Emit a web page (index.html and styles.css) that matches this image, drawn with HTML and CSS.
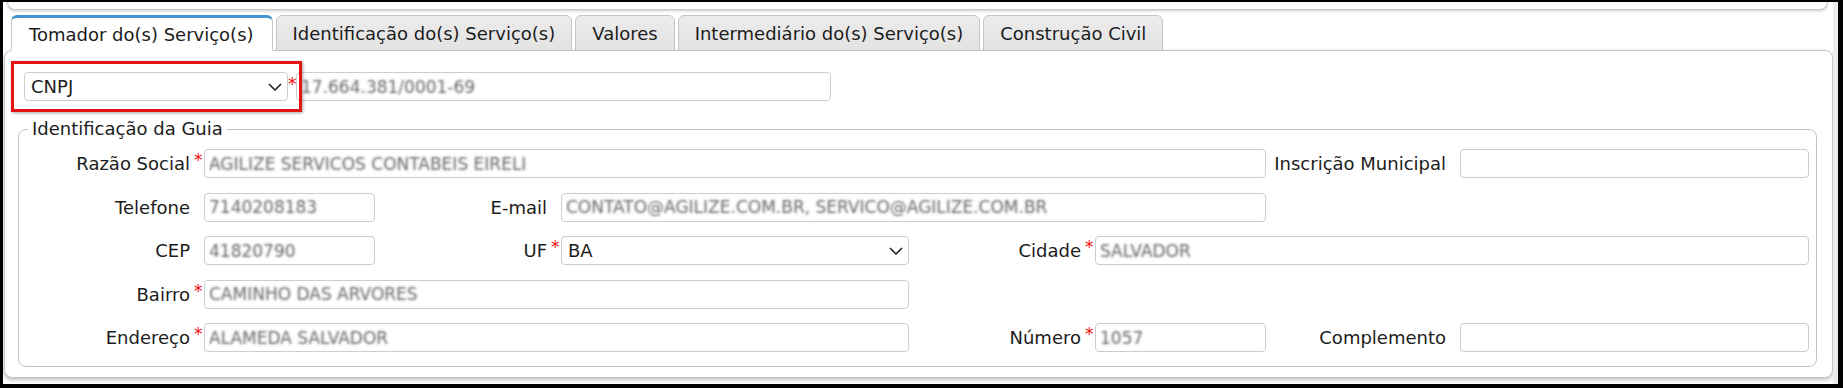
FILE: index.html
```html
<!DOCTYPE html>
<html lang="pt-BR">
<head>
<meta charset="utf-8">
<title>Tomador do(s) Serviço(s)</title>
<link rel="stylesheet" href="styles.css">
</head>
<body>
<div class="screen">
  <div class="prev-panel"></div>
  <div class="tabs">
    <ul class="tab-nav">
      <li class="tab active">Tomador do(s) Serviço(s)</li>
      <li class="tab">Identificação do(s) Serviço(s)</li>
      <li class="tab">Valores</li>
      <li class="tab">Intermediário do(s) Serviço(s)</li>
      <li class="tab">Construção Civil</li>
    </ul>
    <div class="tab-panel">
      <div class="doc-row">
        <div class="select-wrap doc-type">
          <select class="select"><option>CNPJ</option></select>
          <svg class="chev" width="14" height="8" viewBox="0 0 14 8"><path d="M1 1 L7 7 L13 1" fill="none" stroke="#222" stroke-width="1.6"/></svg>
        </div>
        <span class="req doc-req">*</span>
        <input class="field doc-number" value="17.664.381/0001-69">
        <div class="highlight"></div>
      </div>

      <fieldset class="group">
        <legend>Identificação da Guia</legend>
        <div class="form-grid">
          <label class="lbl c1 required">Razão Social<span class="req">*</span></label>
          <input class="field span-2-7" value="AGILIZE SERVICOS CONTABEIS EIRELI">
          <label class="lbl c7">Inscrição Municipal</label>
          <input class="field c8" value="">

          <label class="lbl c1">Telefone</label>
          <input class="field c2" value="7140208183">
          <label class="lbl c3">E-mail</label>
          <input class="field span-4-7" value="CONTATO@AGILIZE.COM.BR, SERVICO@AGILIZE.COM.BR">

          <label class="lbl c1">CEP</label>
          <input class="field c2" value="41820790">
          <label class="lbl c3 required">UF<span class="req">*</span></label>
          <div class="select-wrap c4">
            <select class="select"><option>BA</option></select>
            <svg class="chev" width="14" height="8" viewBox="0 0 14 8"><path d="M1 1 L7 7 L13 1" fill="none" stroke="#222" stroke-width="1.6"/></svg>
          </div>
          <label class="lbl c5 required">Cidade<span class="req">*</span></label>
          <input class="field span-6-9" value="SALVADOR">

          <label class="lbl c1 required">Bairro<span class="req">*</span></label>
          <input class="field span-2-5" value="CAMINHO DAS ARVORES">

          <label class="lbl c1 required">Endereço<span class="req">*</span></label>
          <input class="field span-2-5" value="ALAMEDA SALVADOR">
          <label class="lbl c5 required">Número<span class="req">*</span></label>
          <input class="field c6" value="1057">
          <label class="lbl c7">Complemento</label>
          <input class="field c8" value="">
        </div>
      </fieldset>
    </div>
  </div>
</div>
</body>
</html>
```

FILE: styles.css
```css
html, body {
  margin: 0;
  padding: 0;
}

body {
  background: #000;
  font-family: "DejaVu Sans", "Liberation Sans", sans-serif;
  font-size: 18px;
  color: #1c1c1c;
}

.screen {
  margin: 2px 5px 4px 3px;
  height: 382px;
  background: #fff;
  border-right: 5px solid #ececec;
  overflow: hidden;
}

.prev-panel {
  height: 8px;
  box-sizing: border-box;
  margin: 0 5px 0 4px;
  border: 1px solid #c8c8c8;
  border-top: none;
  border-radius: 0 0 8px 8px;
  background: #fff;
  box-shadow: 0 1px 3px rgba(0, 0, 0, 0.2);
}

.tabs {
  margin: 5px 0 0 1px;
}

.tab-nav {
  display: flex;
  gap: 3px;
  list-style: none;
  margin: 0 0 -1px 7px;
  padding: 0;
  position: relative;
  z-index: 1;
}

.tab {
  box-sizing: border-box;
  height: 36px;
  display: flex;
  align-items: center;
  padding: 0 16px;
  border: 1px solid #c5c5c5;
  border-radius: 6px 6px 0 0;
  background: linear-gradient(#ececec, #e3e3e3);
  color: #1c1c1c;
  white-space: nowrap;
}

.tab.active {
  padding: 0 18px 0 17px;
  background: #fff;
  border-top: 3px solid #4596cf;
  border-bottom-color: #fff;
}

.tab-panel {
  border: 1px solid #c5c5c5;
  border-radius: 8px;
  background: #fff;
  padding: 21px 15px 10px 13px;
  box-shadow: 0 2px 4px rgba(0, 0, 0, 0.25);
}

.doc-row {
  position: relative;
  display: flex;
  align-items: flex-start;
  margin-left: 6px;
  height: 29px;
}

.select-wrap {
  position: relative;
  height: 29px;
}

.doc-type {
  width: 264px;
}

.select {
  appearance: none;
  -webkit-appearance: none;
  box-sizing: border-box;
  width: 100%;
  height: 29px;
  border: 1px solid #cdcdcd;
  border-radius: 4px;
  background: #fff;
  font-family: "DejaVu Sans", sans-serif;
  font-size: 18px;
  color: #1c1c1c;
  padding: 0 6px;
  margin: 0;
}

.chev {
  position: absolute;
  right: 6px;
  top: 11px;
  pointer-events: none;
}

.req {
  color: #ee1111;
  font-size: 17px;
  line-height: 1;
}

.doc-req {
  width: 8px;
  margin-top: 4px;
}

.field {
  box-sizing: border-box;
  height: 29px;
  margin: 0;
  border: 1px solid #cdcdcd;
  border-radius: 4px;
  background: #fff;
  padding: 0 4px;
  font-family: "DejaVu Sans", sans-serif;
  font-size: 17px;
  color: transparent;
  text-shadow: 0 0 2.5px #6a6a6a;
}

.doc-number {
  width: 535px;
}

.highlight {
  position: absolute;
  left: -13px;
  top: -11px;
  width: 291px;
  height: 51px;
  box-sizing: border-box;
  border: 3px solid #e41414;
  box-shadow: 1px 1px 3px rgba(0, 0, 0, 0.35);
  pointer-events: none;
}

.group {
  margin: 18px 0 0 0;
  border: 1px solid #c3c3c3;
  border-radius: 8px;
  padding: 10px 7px 14px 0;
  min-width: 0;
}

.group legend {
  margin-left: 9px;
  padding: 0 4px;
  line-height: 20px;
  font-size: 18px;
}

.form-grid {
  display: grid;
  grid-template-columns: 185px 171px 186px 348px 186px 171px 194px 349px;
  grid-auto-rows: 29px;
  row-gap: 14.5px;
}

.lbl {
  display: flex;
  align-items: center;
  justify-content: flex-end;
  padding-right: 14px;
  white-space: nowrap;
}

.lbl.required {
  padding-right: 0;
}

.lbl .req {
  align-self: flex-start;
  width: 14px;
  margin-top: 3px;
  padding-left: 4px;
  box-sizing: border-box;
}

.c1 { grid-column: 1; }
.c2 { grid-column: 2; }
.c3 { grid-column: 3; }
.c4 { grid-column: 4; }
.c5 { grid-column: 5; }
.c6 { grid-column: 6; }
.c7 { grid-column: 7; }
.c8 { grid-column: 8; }
.span-2-7 { grid-column: 2 / 7; }
.span-4-7 { grid-column: 4 / 7; }
.span-6-9 { grid-column: 6 / 9; }
.span-2-5 { grid-column: 2 / 5; }
```
